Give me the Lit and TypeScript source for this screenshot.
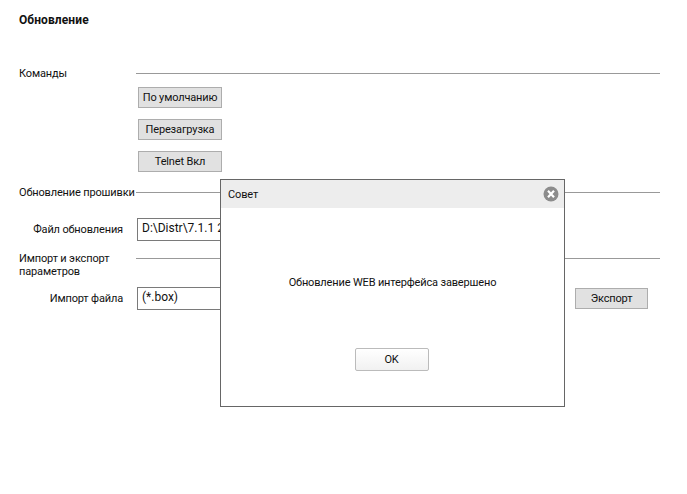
import { LitElement, html, css } from "lit";
import { customElement } from "lit/decorators.js";

@customElement("app-root")
export class AppRoot extends LitElement {
  static styles = css`
    :host {
      display: block;
      position: relative;
      width: 687px;
      height: 494px;
      background: #fff;
      font-family: Roboto, "Liberation Sans", Arial, sans-serif;
      font-size: 11px;
      letter-spacing: -0.15px;
      color: #111;
      overflow: hidden;
    }
    .page {
      display: flex;
      flex-direction: column;
      padding: 13px 27px 0 19px;
    }
    .title {
      font-weight: 700;
      font-size: 12px;
      letter-spacing: 0.1px;
      line-height: 14px;
      margin-bottom: 40px;
    }
    .section {
      display: grid;
      grid-template-columns: 117px 1fr;
      line-height: 13px;
    }
    .section span {
      white-space: nowrap;
    }
    .section .line {
      border-top: 1px solid #999;
      margin-top: 6px;
      height: 0;
    }
    .commands {
      display: flex;
      flex-direction: column;
      gap: 11px;
      padding: 7px 0 14px 119px;
      align-items: flex-start;
    }
    button {
      font: inherit;
      letter-spacing: inherit;
      color: inherit;
      padding: 0;
      width: 84px;
      height: 21px;
      box-sizing: border-box;
      background: #e1e1e1;
      border: 1px solid #adadad;
    }
    .row {
      display: flex;
      align-items: center;
    }
    .row label {
      width: 104px;
      text-align: right;
      margin-right: 14px;
      white-space: nowrap;
    }
    .input {
      width: 300px;
      height: 23px;
      box-sizing: border-box;
      border: 1px solid #7a7a7a;
      padding: 0 4px;
      font-size: 12px;
      letter-spacing: 0;
      line-height: 19px;
      white-space: nowrap;
      overflow: hidden;
    }
    .export {
      width: 73px;
      margin-left: 138px;
    }
    .s2 { margin-bottom: 19px; }
    .s3 { margin-top: 11px; margin-bottom: 9px; }
    .dialog {
      position: absolute;
      left: 220px;
      top: 179px;
      width: 345px;
      height: 228px;
      box-sizing: border-box;
      border: 1px solid #666;
      background: #fff;
      display: flex;
      flex-direction: column;
    }
    .head {
      height: 28px;
      background: #ededed;
      display: flex;
      align-items: center;
      justify-content: space-between;
      padding: 0 5px 0 7px;
      flex: none;
    }
    .close { display: block; }
    .body {
      flex: 1;
      display: flex;
      flex-direction: column;
      align-items: center;
    }
    .msg {
      margin-top: 68px;
      line-height: 14px;
    }
    .ok {
      margin-top: 58px;
      margin-right: 2px;
      width: 74px;
      height: 23px;
      background: linear-gradient(#fff, #f1f1f1);
      border: 1px solid #bbb;
      border-radius: 2px;
    }
  `;

  render() {
    return html`
      <div class="page">
        <div class="title">Обновление</div>
        <div class="section"><span>Команды</span><div class="line"></div></div>
        <div class="commands">
          <button>По умолчанию</button>
          <button>Перезагрузка</button>
          <button>Telnet Вкл</button>
        </div>
        <div class="section s2"><span>Обновление прошивки</span><div class="line"></div></div>
        <div class="row">
          <label>Файл обновления</label>
          <div class="input">D:\\Distr\\7.1.1 2021</div>
        </div>
        <div class="section s3"><span>Импорт и экспорт<br />параметров</span><div class="line"></div></div>
        <div class="row">
          <label>Импорт файла</label>
          <div class="input">(*.box)</div>
          <button class="export">Экспорт</button>
        </div>
      </div>
      <div class="dialog">
        <div class="head">
          <span>Совет</span>
          <svg class="close" width="16" height="16" viewBox="0 0 16 16">
            <circle cx="8" cy="8" r="7.5" fill="#8c8c8c" />
            <path d="M5 4.8 11 11.2M11 4.8 5 11.2" stroke="#fff" stroke-width="2.2" />
          </svg>
        </div>
        <div class="body">
          <div class="msg">Обновление WEB интерфейса завершено</div>
          <button class="ok">OK</button>
        </div>
      </div>
    `;
  }
}
